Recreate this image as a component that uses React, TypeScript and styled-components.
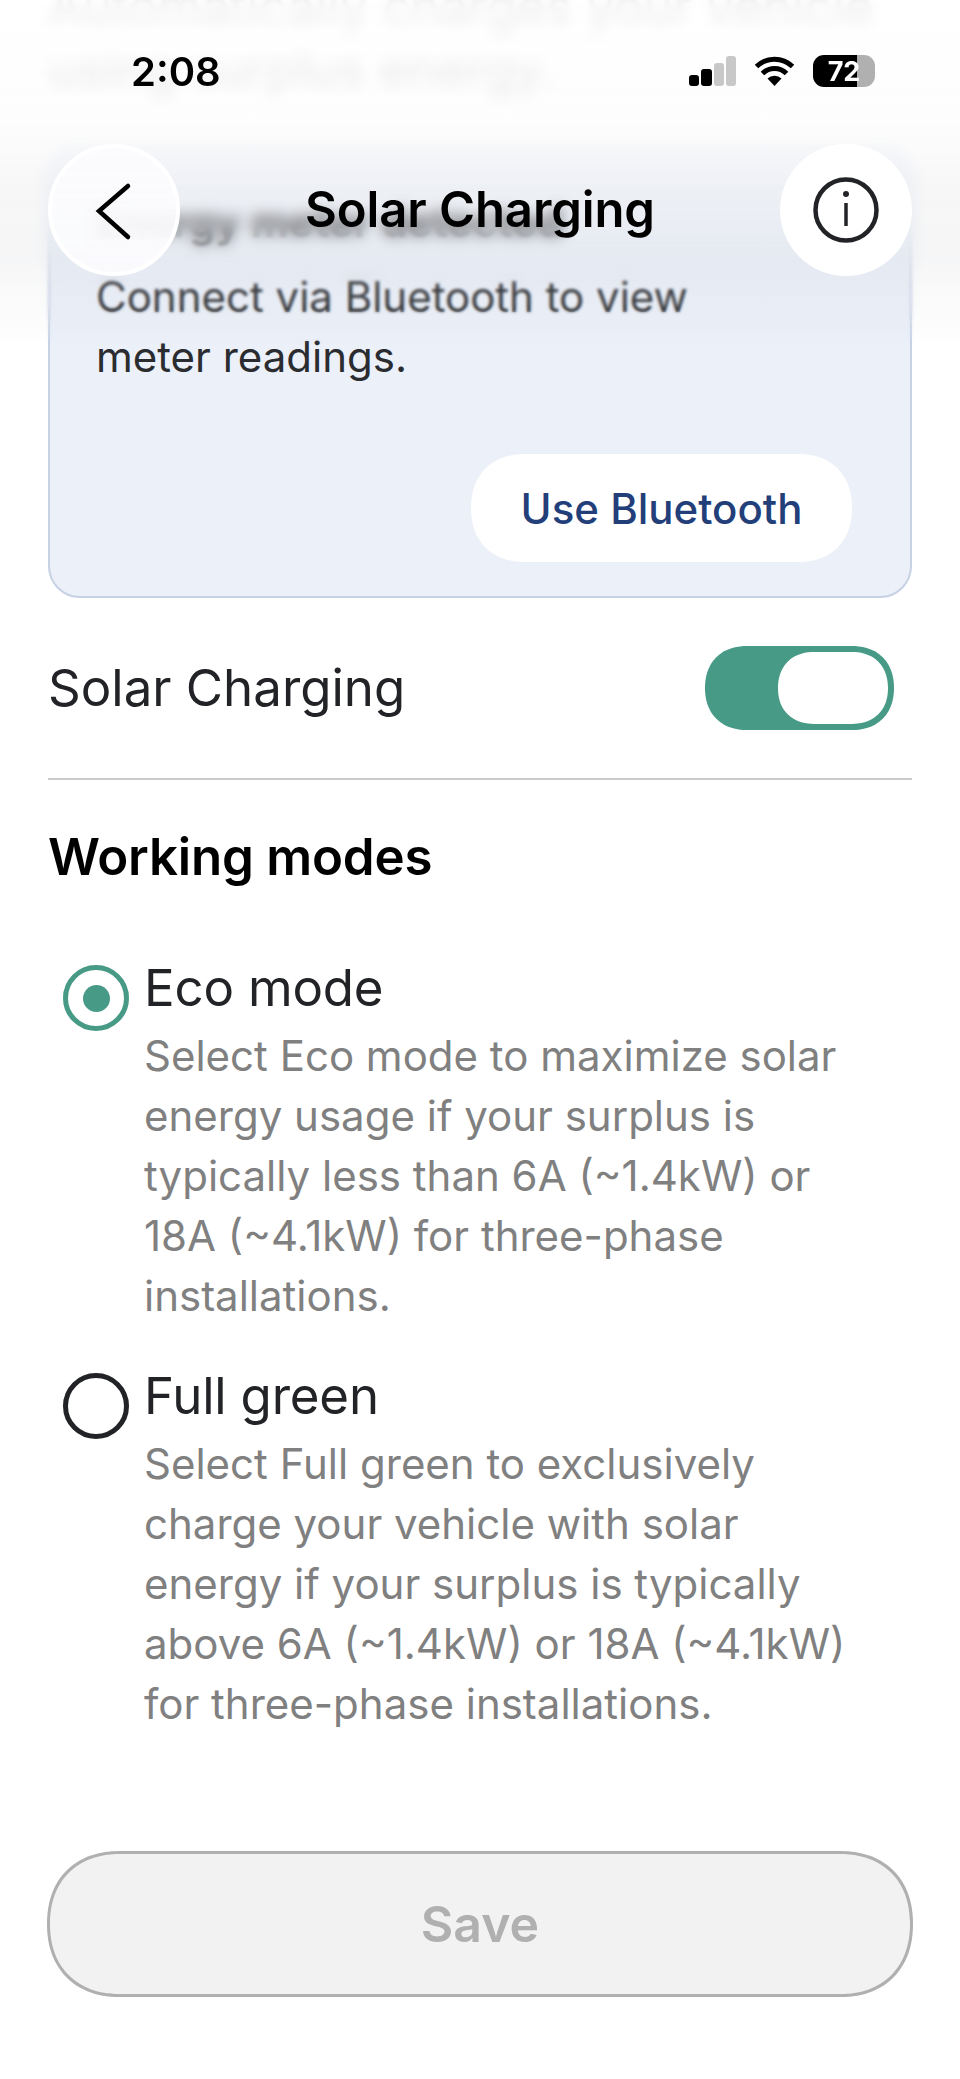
import React from 'react';
import styled, { createGlobalStyle } from 'styled-components';

const GlobalStyle = createGlobalStyle`
  html, body {
    margin: 0;
    padding: 0;
    background: #fff;
  }
  body {
    font-family: Inter, "Noto Sans", "Liberation Sans", sans-serif;
    color: #222326;
  }
`;

const Screen = styled.div`
  position: relative;
  width: 960px;
  height: 2079px;
  overflow: hidden;
  background: #fff;
`;

const Content = styled.main`
  display: flex;
  flex-direction: column;
  margin-top: -24px;
  padding: 0 48px;
`;

const Intro = styled.p`
  margin: 0 0 45px;
  font-size: 50px;
  line-height: 62px;
  color: #6a6a6a;
`;

const Card = styled.section`
  box-sizing: border-box;
  display: flex;
  flex-direction: column;
  height: 453px;
  padding: 45px 46px 34px;
  background: #ebf0f9;
  border: 2px solid #c6d1e4;
  border-radius: 32px;
`;

const CardTitle = styled.h2`
  margin: 0 0 15px;
  font-size: 42px;
  line-height: 60px;
  font-weight: 700;
  color: #222326;
`;

const CardText = styled.p`
  margin: 0;
  font-size: 42px;
  line-height: 60px;
  color: #2a2c30;
`;

const BluetoothButton = styled.button`
  align-self: flex-end;
  margin-top: auto;
  margin-right: 12px;
  width: 381px;
  height: 108px;
  border: 0;
  border-radius: 54px;
  corner-shape: superellipse(1.15);
  background: #fff;
  font-family: inherit;
  font-size: 42px;
  font-weight: 500;
  color: #233f7a;
`;

const ToggleRow = styled.div`
  display: flex;
  align-items: center;
  justify-content: space-between;
  height: 180px;
  padding-right: 18px;
  border-bottom: 2px solid #cbcbcb;
`;

const RowLabel = styled.span`
  font-size: 51px;
  line-height: 60px;
  color: #222326;
`;

const ToggleTrack = styled.div`
  box-sizing: border-box;
  display: flex;
  justify-content: flex-end;
  width: 189px;
  height: 84px;
  padding: 6px;
  border-radius: 42px;
  corner-shape: superellipse(1.15);
  background: #479a85;
`;

const ToggleThumb = styled.div`
  width: 110px;
  height: 72px;
  border-radius: 36px;
  corner-shape: superellipse(1.15);
  background: #fff;
`;

const SectionTitle = styled.h2`
  margin: 47px 0 0;
  font-size: 51px;
  line-height: 60px;
  font-weight: 600;
  letter-spacing: -0.2px;
  color: #000;
`;

const ModeList = styled.div`
  display: flex;
  flex-direction: column;
  gap: 40px;
  margin-top: 71px;
`;

const Mode = styled.label`
  display: flex;
  align-items: flex-start;
  gap: 15px;
  padding-left: 15px;
`;

const Radio = styled.span<{ $checked?: boolean }>`
  box-sizing: border-box;
  flex: none;
  display: flex;
  align-items: center;
  justify-content: center;
  width: 66px;
  height: 66px;
  margin-top: 7px;
  border-radius: 50%;
  border: 5px solid ${(p) => (p.$checked ? '#479a85' : '#222326')};

  &::after {
    content: '';
    display: ${(p) => (p.$checked ? 'block' : 'none')};
    width: 27px;
    height: 27px;
    border-radius: 50%;
    background: #479a85;
  }
`;

const ModeBody = styled.div`
  display: flex;
  flex-direction: column;
  gap: 8px;
`;

const ModeName = styled.span`
  font-size: 51px;
  line-height: 60px;
  letter-spacing: -0.2px;
  color: #222326;
`;

const ModeText = styled.p`
  margin: 0;
  font-size: 42px;
  line-height: 60px;
  color: #808080;
`;

const SaveButton = styled.button`
  box-sizing: border-box;
  width: calc(100% + 2px);
  height: 146px;
  margin: 117px -1px 0;
  border: 3px solid #b0b0b0;
  border-radius: 73px;
  corner-shape: superellipse(1.15);
  background: #f2f2f2;
  font-family: inherit;
  font-size: 50px;
  font-weight: 600;
  color: #b0b0b0;
`;

/* frosted header, lies over the scrolled content */
const BlurStrong = styled.div`
  position: absolute;
  top: 0;
  left: 0;
  right: 0;
  height: 290px;
  backdrop-filter: blur(7px);
  mask-image: linear-gradient(to bottom, #000 78%, transparent 100%);
`;

const BlurSoft = styled.div`
  position: absolute;
  top: 0;
  left: 0;
  right: 0;
  height: 345px;
  backdrop-filter: blur(1.6px);
  mask-image: linear-gradient(to bottom, #000 88%, transparent 100%);
`;

const Tint = styled.div`
  position: absolute;
  top: 0;
  left: 0;
  right: 0;
  height: 350px;
  background: linear-gradient(
    to bottom,
    rgba(255, 255, 255, 0.88) 0,
    rgba(253, 253, 253, 0.85) 120px,
    rgba(240, 240, 241, 0.55) 190px,
    rgba(205, 207, 212, 0.18) 260px,
    rgba(205, 207, 212, 0) 350px
  );
`;

const Header = styled.header`
  position: absolute;
  top: 0;
  left: 0;
  right: 0;
  display: flex;
  flex-direction: column;
  padding: 0 48px;
`;

const StatusBar = styled.div`
  display: flex;
  align-items: center;
  height: 72px;
  margin-top: 35px;
  padding: 0 37px 0 83px;
`;

const Clock = styled.span`
  flex: 1;
  font-size: 40px;
  font-weight: 600;
  color: #000;
`;

const StatusIcons = styled.div`
  display: flex;
  align-items: center;
  gap: 18px;
`;

const Battery = styled.div`
  display: flex;
  align-items: center;
  justify-content: center;
  width: 62px;
  height: 32px;
  border-radius: 11px;
  overflow: hidden;
  background: linear-gradient(to right, #000 44px, #b0b0b0 44px);
  font-size: 27px;
  font-weight: 700;
  color: #fff;
`;

const NavBar = styled.nav`
  display: flex;
  align-items: center;
  justify-content: space-between;
  margin-top: 37px;
`;

const RoundButton = styled.button<{ $glass?: boolean }>`
  box-sizing: border-box;
  display: flex;
  align-items: center;
  justify-content: center;
  width: 132px;
  height: 132px;
  padding: 0;
  border: ${(p) => (p.$glass ? '4px solid #fff' : '0')};
  border-radius: 50%;
  background: ${(p) => (p.$glass ? 'rgba(252, 252, 254, 0.92)' : '#fff')};
`;

const NavTitle = styled.h1`
  margin: 0;
  font-size: 49px;
  line-height: 60px;
  font-weight: 600;
  letter-spacing: -0.1px;
  color: #000;
`;

export default function App() {
  return (
    <Screen>
      <GlobalStyle />
      <Content>
        <Intro>
          Automatically charges your vehicle
          <br />
          using surplus energy.
        </Intro>
        <Card>
          <CardTitle>Energy meter detected</CardTitle>
          <CardText>
            Connect via Bluetooth to view
            <br />
            meter readings.
          </CardText>
          <BluetoothButton>Use Bluetooth</BluetoothButton>
        </Card>
        <ToggleRow>
          <RowLabel>Solar Charging</RowLabel>
          <ToggleTrack>
            <ToggleThumb />
          </ToggleTrack>
        </ToggleRow>
        <SectionTitle>Working modes</SectionTitle>
        <ModeList>
          <Mode>
            <Radio $checked />
            <ModeBody>
              <ModeName>Eco mode</ModeName>
              <ModeText>
                Select Eco mode to maximize solar
                <br />
                energy usage if your surplus is
                <br />
                typically less than 6A (~1.4kW) or
                <br />
                18A (~4.1kW) for three-phase
                <br />
                installations.
              </ModeText>
            </ModeBody>
          </Mode>
          <Mode>
            <Radio />
            <ModeBody>
              <ModeName>Full green</ModeName>
              <ModeText>
                Select Full green to exclusively
                <br />
                charge your vehicle with solar
                <br />
                energy if your surplus is typically
                <br />
                above 6A (~1.4kW) or 18A (~4.1kW)
                <br />
                for three-phase installations.
              </ModeText>
            </ModeBody>
          </Mode>
        </ModeList>
        <SaveButton disabled>Save</SaveButton>
      </Content>

      <BlurSoft />
      <BlurStrong />
      <Tint />
      <Header>
        <StatusBar>
          <Clock>2:08</Clock>
          <StatusIcons>
            <svg width="47" height="30" viewBox="0 0 47 30">
              <rect x="0" y="19" width="10" height="11" rx="3" fill="#000" />
              <rect x="12" y="13" width="11" height="17" rx="3" fill="#000" />
              <rect x="25" y="7" width="10" height="23" rx="3" fill="#c8c8c8" />
              <rect x="37" y="0" width="10" height="30" rx="3" fill="#c8c8c8" />
            </svg>
            <svg width="41" height="30" viewBox="0 0 41 30">
              <path d="M20.5 30l-7-7.5a10 10 0 0 1 14 0z" fill="#000" />
              <path d="M8.5 17.5a17 17 0 0 1 24 0" fill="none" stroke="#000" strokeWidth="5" />
              <path d="M2.5 10.5a26 26 0 0 1 36 0" fill="none" stroke="#000" strokeWidth="5" />
            </svg>
            <Battery>72</Battery>
          </StatusIcons>
        </StatusBar>
        <NavBar>
          <RoundButton $glass aria-label="Back">
            <svg width="132" height="132" viewBox="0 0 132 132" style={{ margin: -4 }}>
              <path
                d="M80 42L51 67l29 26"
                fill="none"
                stroke="#000"
                strokeWidth="4.5"
                strokeLinecap="round"
                strokeLinejoin="miter"
              />
            </svg>
          </RoundButton>
          <NavTitle>Solar Charging</NavTitle>
          <RoundButton aria-label="Info">
            <svg width="66" height="66" viewBox="0 0 66 66">
              <circle cx="33" cy="33" r="30.5" fill="none" stroke="#222326" strokeWidth="4.5" />
              <circle cx="33" cy="17" r="3" fill="#222326" />
              <path d="M33 26v23" stroke="#222326" strokeWidth="3.5" />
            </svg>
          </RoundButton>
        </NavBar>
      </Header>
    </Screen>
  );
}
